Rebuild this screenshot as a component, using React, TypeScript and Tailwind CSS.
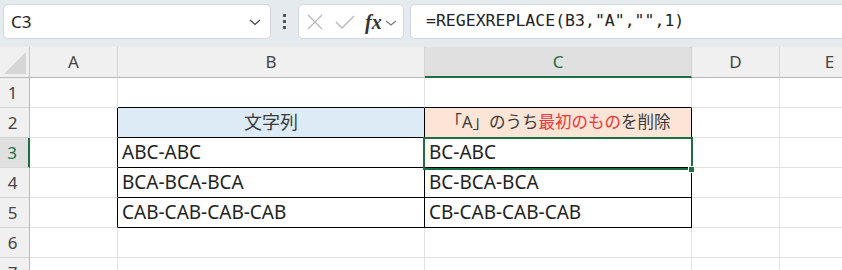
import React from 'react';

const cols = [
  { key: 'A', w: 88 },
  { key: 'B', w: 307 },
  { key: 'C', w: 267 },
  { key: 'D', w: 88 },
  { key: 'E', w: 100 },
];

const rows = [1, 2, 3, 4, 5, 6, 7];

const cellFont = { fontFamily: '"Noto Sans", "Noto Sans CJK JP", sans-serif' };

type CellDef = { text?: React.ReactNode; fill?: string; size?: string };

const data: Record<string, CellDef> = {
  B2: { text: '文字列', fill: 'bg-[#ddebf7]', size: 'text-[18px]' },
  C2: {
    text: (
      <>
        「A」のうち<span className="text-[#ef3535]">最初のもの</span>を削除
      </>
    ),
    fill: 'bg-[#fce4d6]',
    size: 'text-[16.5px]',
  },
  B3: { text: 'ABC-ABC' },
  C3: { text: 'BC-ABC' },
  B4: { text: 'BCA-BCA-BCA' },
  C4: { text: 'BC-BCA-BCA' },
  B5: { text: 'CAB-CAB-CAB-CAB' },
  C5: { text: 'CB-CAB-CAB-CAB' },
};

const inTable = (c: string, r: number) => (c === 'B' || c === 'C') && r >= 2 && r <= 5;

function Cell({ c, r }: { c: string; r: number }) {
  const def = data[`${c}${r}`];
  const right = inTable(c, r) || (c === 'A' && r >= 2 && r <= 5) ? 'border-r-black' : 'border-r-[#e1e1e1]';
  const bottom = inTable(c, r) || ((c === 'B' || c === 'C') && r === 1) ? 'border-b-black' : 'border-b-[#e1e1e1]';
  return (
    <div
      className={`h-[30px] border-r border-b ${right} ${bottom} ${def?.fill ?? 'bg-white'} flex items-center overflow-visible whitespace-nowrap ${
        def?.size ? `justify-center text-[#3a3a3a] ${def.size}` : 'pl-[4px] text-[19px] text-[#222]'
      }`}
      style={cellFont}
    >
      {def?.text}
    </div>
  );
}

export default function App() {
  return (
    <div className="w-[842px] h-[270px] overflow-hidden bg-white relative">
      {/* formula toolbar */}
      <div className="h-[47px] bg-[#e5eaee] flex items-start pt-[4px] pl-[3px] gap-0">
        <div className="w-[268px] h-[35px] bg-white border border-[#d4d8dc] rounded-[5px] flex items-center pl-[7px] pr-[8px]">
          <span className="text-[17px] text-[#222] flex-1" style={cellFont}>C3</span>
          <svg width="14" height="10" viewBox="0 0 14 10">
            <path d="M2 3 L7 7.5 L12 3" fill="none" stroke="#444" strokeWidth="1.3" />
          </svg>
        </div>
        <div className="w-[27px] h-[35px] flex flex-col items-center justify-center gap-[3px]">
          <span className="w-[3px] h-[3px] bg-[#555]" />
          <span className="w-[3px] h-[3px] bg-[#555]" />
          <span className="w-[3px] h-[3px] bg-[#555]" />
        </div>
        <div className="w-[106px] h-[35px] bg-white border border-[#d4d8dc] rounded-[5px] flex items-center pl-[7px]">
          <svg width="18" height="18" viewBox="0 0 18 18" className="mr-[11px]">
            <path d="M2 2 L16 16 M16 2 L2 16" stroke="#b8b8b8" strokeWidth="1.3" fill="none" />
          </svg>
          <svg width="20" height="16" viewBox="0 0 20 16" className="mr-[10px]">
            <path d="M1 8 L7 14 L19 2" stroke="#b8b8b8" strokeWidth="1.3" fill="none" />
          </svg>
          <span
            className="text-[20px] italic font-bold text-[#333] leading-none"
            style={{ fontFamily: '"Liberation Serif", "DejaVu Serif", serif' }}
          >
            fx
          </span>
          <svg width="12" height="8" viewBox="0 0 12 8" className="ml-[3px] mt-[2px]">
            <path d="M1 2 L6 6 L11 2" fill="none" stroke="#777" strokeWidth="1.1" />
          </svg>
        </div>
        <div className="ml-[6px] flex-1 h-[35px] bg-white border border-[#d4d8dc] rounded-l-[5px] border-r-0 flex items-center pl-[15px]">
          <span
            className="text-[16.5px] text-[#222] whitespace-nowrap"
            style={{ fontFamily: '"DejaVu Sans Mono", "Liberation Mono", monospace' }}
          >
            =REGEXREPLACE(B3,"A","",1)
          </span>
        </div>
      </div>

      {/* sheet grid */}
      <div className="relative">
        <div className="grid" style={{ gridTemplateColumns: `30px ${cols.map((c) => c.w + 'px').join(' ')}` }}>
          {/* corner */}
          <div className="h-[31px] bg-[#f0f0f0] border-r border-b border-r-[#c6c6c6] border-b-[#b8b8b8] flex items-end justify-end pr-[3px] pb-[3px]">
            <svg width="22" height="22" viewBox="0 0 22 22">
              <path d="M22 0 L22 22 L0 22 Z" fill="#d6d6d6" />
            </svg>
          </div>
          {cols.map((c) => (
            <div
              key={c.key}
              className={`h-[31px] flex items-center justify-center text-[17px] ${
                c.key === 'C'
                  ? 'bg-[#e0e0e0] border-b-2 border-b-[#1e6e42] text-[#1e6e42] border-r border-r-[#cfcfcf]'
                  : 'bg-[#f0f0f0] border-b border-b-[#b8b8b8] text-[#444] border-r border-r-[#d4d4d4]'
              }`}
              style={cellFont}
            >
              {c.key}
            </div>
          ))}
          {rows.map((r) => (
            <React.Fragment key={r}>
              <div
                className={`h-[30px] flex items-center justify-center pr-[4px] text-[17px] border-b border-b-[#d4d4d4] ${
                  r === 3
                    ? 'bg-[#e0e0e0] border-r-2 border-r-[#1e6e42] text-[#1e6e42]'
                    : 'bg-[#f0f0f0] border-r border-r-[#b8b8b8] text-[#444]'
                }`}
                style={cellFont}
              >
                {r}
              </div>
              {cols.map((c) => (
                <Cell key={c.key} c={c.key} r={r} />
              ))}
            </React.Fragment>
          ))}
        </div>

        {/* active cell C3 selection */}
        <div className="absolute left-[423px] top-[90px] w-[270px] h-[33px] border-2 border-[#1e6e42] pointer-events-none" />
        <div className="absolute left-[688px] top-[119px] w-[7px] h-[7px] bg-[#1e6e42] border border-white" />
      </div>
    </div>
  );
}
